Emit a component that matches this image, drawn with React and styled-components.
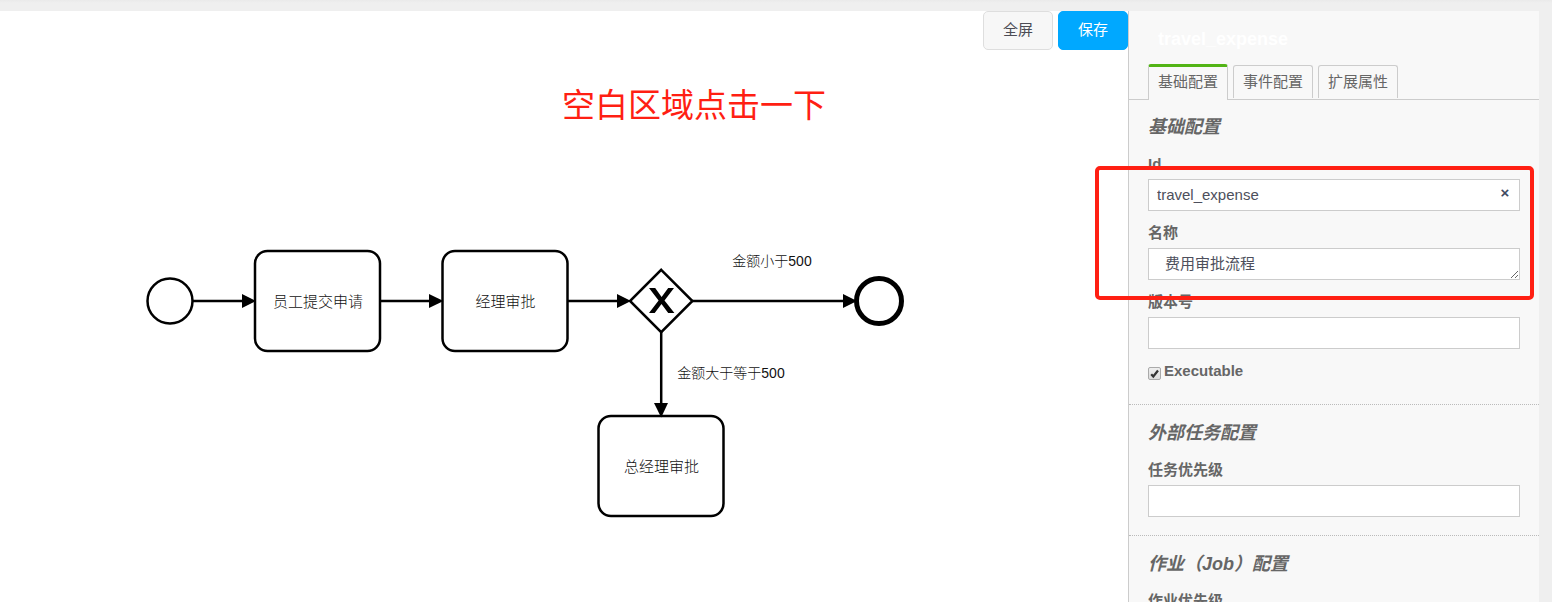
import React from 'react';
import styled, { createGlobalStyle, css } from 'styled-components';

const GlobalStyle = createGlobalStyle`
  *, *::before, *::after { box-sizing: border-box; }
  body {
    margin: 0;
    background: #efefef;
    color: #666;
    font: 15px/22px "Liberation Sans", "Noto Sans CJK SC", sans-serif;
  }
  button, input, textarea { font: inherit; }
`;

const Page = styled.div`
  height: 100vh;
  overflow: hidden;
  padding: 11px 13px 0 0;
  background: linear-gradient(#eaeaea, #efefef 3px);
`;

const Modeler = styled.main`
  display: flex;
  align-items: stretch;
  min-height: 100%;
`;

const Canvas = styled.section`
  position: relative;
  flex: 1;
  min-width: 0;
  overflow: hidden;
  background: #fff;
`;

const Toolbar = styled.div`
  position: absolute;
  top: 0;
  right: 0;
  display: flex;
  gap: 5px;
`;

const ToolButton = styled.button`
  height: 39px;
  padding: 0 19px 2px;
  border: 1px solid ${(p) => (p.$primary ? '#00a8ff' : '#dedede')};
  border-radius: 5px;
  background: ${(p) => (p.$primary ? '#00a8ff' : '#f7f7f7')};
  color: ${(p) => (p.$primary ? '#fff' : '#4c4c55')};
  cursor: pointer;
`;

const Drawing = styled.svg`
  display: block;
  fill: none;
  stroke: #000;
  stroke-width: 2.5px;

  text {
    fill: #111;
    stroke: none;
    text-anchor: middle;
  }
`;

const TaskText = styled.text`
  font-size: 15px;
  font-weight: 300;
`;

const FlowText = styled.text`
  font-size: 14px;
  font-weight: 300;
`;

const NoteText = styled.text`
  && { fill: #ff1f13; }
  font-size: 33px;
`;

const Panel = styled.aside`
  position: relative;
  flex: none;
  width: 411px;
  border-left: 1px solid #ccc;
  background: #f8f8f8;
`;

const PanelTitle = styled.h1`
  margin: 0;
  padding: 16px 29px 13px;
  color: #fff;
  font-size: 18px;
  line-height: 24px;
`;

const Tabs = styled.nav`
  display: flex;
  align-items: flex-end;
  gap: 5px;
  padding: 0 19px;
  border-bottom: 1px solid #ccc;
`;

const Tab = styled.a`
  height: 33px;
  margin-bottom: 1px;
  padding: 5px 9px 0;
  border: 1px solid #ccc;
  border-bottom: 0;
  border-radius: 3px 3px 0 0;
  background: #f8f8f8;
  color: #666;
  text-decoration: none;
  ${(p) => p.$active && css`
    height: 36px;
    margin-bottom: -1px;
    padding-top: 4px;
    border-top: 3px solid #52b415;
  `}
`;

const Group = styled.section`
  padding: 15px 19px 18px;
  & + & {
    padding-top: 16px;
    border-top: 1px dotted #bbb;
  }
`;

const GroupTitle = styled.h2`
  margin: 0 0 3px;
  font-size: 18px;
  font-style: italic;
  line-height: 24px;
`;

const Field = styled.div`
  position: relative;
  padding-top: 11px;
`;

const Label = styled.label`
  display: block;
  font-weight: bold;
`;

const control = css`
  display: block;
  width: 100%;
  height: 32px;
  margin: 4px 0 0;
  border: 1px solid #ccc;
  border-radius: 0;
  background: #fff;
  color: #4d4f5c;
  outline: 0;
`;

const Input = styled.input`
  ${control}
  padding: 0 8px 2px;
`;

const TextArea = styled.textarea`
  ${control}
  padding: 4px 16px;
  overflow: hidden;
  resize: vertical;
`;

const ClearButton = styled.button`
  position: absolute;
  right: 8px;
  bottom: 8px;
  width: 14px;
  height: 20px;
  padding: 0;
  border: 0;
  background: none;
  color: #3f4a63;
  font-weight: bold;
  line-height: 20px;
  cursor: pointer;
`;

const CheckField = styled.div`
  display: flex;
  align-items: flex-start;
  gap: 3px;
  height: 37px;
  padding-top: 11px;
`;

const CheckBox = styled.span`
  display: grid;
  margin-top: 7px;

  input, svg { grid-area: 1 / 1; }

  input {
    appearance: none;
    width: 13px;
    height: 13px;
    margin: 0;
    border: 1px solid #aaa;
    border-radius: 2px;
    background: linear-gradient(#eee, #ddd);
  }

  svg {
    visibility: hidden;
    pointer-events: none;
  }

  input:checked + svg { visibility: visible; }
`;

const Highlight = styled.div`
  position: absolute;
  top: 155px;
  left: -34px;
  right: 5px;
  height: 134px;
  border: 4px solid #ff1f13;
  border-radius: 5px;
  pointer-events: none;
`;

function Task({ x, y, children }) {
  return (
    <g>
      <rect x={x} y={y} width="125" height="100" rx="12.5" />
      <TaskText x={x + 63} y={y + 56}>{children}</TaskText>
    </g>
  );
}

function Flow({ d, head }) {
  return (
    <g>
      <path d={d} />
      <path d={head} fill="#000" stroke="none" />
    </g>
  );
}

function Diagram() {
  return (
    <Drawing width="1128" height="591" viewBox="0 11 1128 591" role="img" aria-label="费用审批流程">
      <NoteText x="694" y="117">空白区域点击一下</NoteText>
      <circle cx="170" cy="301" r="22.5" />
      <Task x={255} y={251}>员工提交申请</Task>
      <Task x={442.5} y={251}>经理审批</Task>
      <Task x={598.5} y={416}>总经理审批</Task>
      <path d="M661.2 269.8 692.4 301 661.2 332.2 630 301Z" />
      <path
        d="M649 288h6.2l6.4 8.9 6.6-8.9h5.8l-9.5 12.4 9.9 12.6h-6.2l-6.7-9.1-6.8 9.1H649l9.6-12.6Z"
        fill="#000"
        stroke="none"
      />
      <circle cx="879" cy="301" r="22.5" strokeWidth="5" />
      <Flow d="M193 301H244" head="M242 294 256 301 242 308Z" />
      <Flow d="M381 301H431" head="M429 294 443.5 301 429 308Z" />
      <Flow d="M568 301H619" head="M617 294 631 301 617 308Z" />
      <Flow d="M692 301H845" head="M843 294 857 301 843 308Z" />
      <Flow d="M661.2 332V405" head="M654 403H668L661.2 417.5Z" />
      <FlowText x="772" y="266">金额小于500</FlowText>
      <FlowText x="731" y="378">金额大于等于500</FlowText>
    </Drawing>
  );
}

export default function App() {
  return (
    <>
      <GlobalStyle />
      <Page>
        <Modeler>
          <Canvas>
            <Diagram />
            <Toolbar>
              <ToolButton type="button">全屏</ToolButton>
              <ToolButton type="button" $primary>保存</ToolButton>
            </Toolbar>
          </Canvas>
          <Panel>
            <PanelTitle>travel_expense</PanelTitle>
            <Tabs>
              <Tab href="#general" $active>基础配置</Tab>
              <Tab href="#listeners">事件配置</Tab>
              <Tab href="#extensions">扩展属性</Tab>
            </Tabs>
            <Group>
              <GroupTitle>基础配置</GroupTitle>
              <Field>
                <Label htmlFor="process-id">Id</Label>
                <Input id="process-id" defaultValue="travel_expense" />
                <ClearButton type="button" aria-label="清除">×</ClearButton>
              </Field>
              <Field>
                <Label htmlFor="process-name">名称</Label>
                <TextArea id="process-name" rows={1} defaultValue="费用审批流程" />
              </Field>
              <Field>
                <Label htmlFor="process-version">版本号</Label>
                <Input id="process-version" />
              </Field>
              <CheckField>
                <CheckBox>
                  <input id="process-executable" type="checkbox" defaultChecked />
                  <svg width="13" height="13" viewBox="0 0 13 13" aria-hidden="true">
                    <path d="M3.2 7.2 5.3 9.5 10 3.5" fill="none" stroke="#333" strokeWidth="2.2" />
                  </svg>
                </CheckBox>
                <Label htmlFor="process-executable">Executable</Label>
              </CheckField>
            </Group>
            <Group>
              <GroupTitle>外部任务配置</GroupTitle>
              <Field>
                <Label htmlFor="task-priority">任务优先级</Label>
                <Input id="task-priority" />
              </Field>
            </Group>
            <Group>
              <GroupTitle>作业（Job）配置</GroupTitle>
              <Field>
                <Label htmlFor="job-priority">作业优先级</Label>
                <Input id="job-priority" />
              </Field>
            </Group>
            <Highlight />
          </Panel>
        </Modeler>
      </Page>
    </>
  );
}
